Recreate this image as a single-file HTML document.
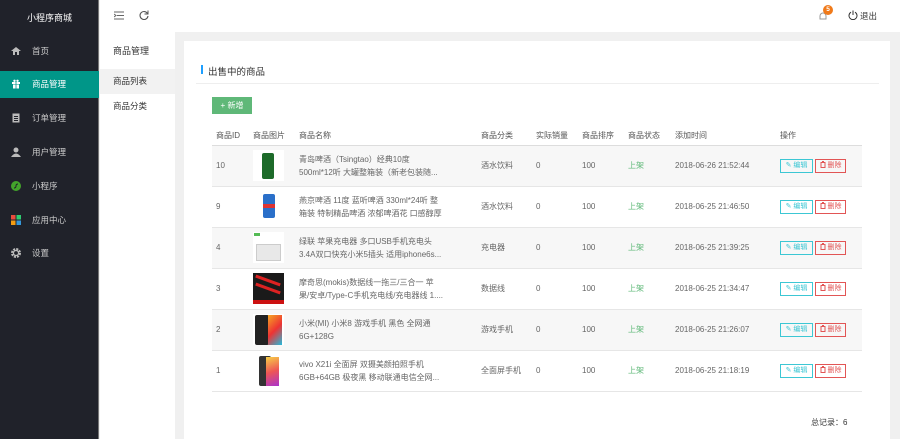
<!DOCTYPE html>
<html><head><meta charset="utf-8"><style>
*{margin:0;padding:0;box-sizing:border-box}
body{width:900px;height:439px;overflow:hidden;font-family:"Liberation Sans","Noto Sans CJK SC",sans-serif;font-size:8px;color:#555;background:#f0f0f0;position:relative}
.side{position:absolute;left:0;top:0;width:99px;height:439px;background:#20222a;color:#ddd;border-right:1px solid #777}
.logo{position:absolute;top:11px;width:99px;text-align:center;font-size:9px;color:#fff}
.mi{position:absolute;left:0;width:99px;height:27px;line-height:27px;padding-left:32px;font-size:8.5px;color:#ccc}
.mi.act{background:#009688;color:#fff}
.ic{position:absolute;left:11px;top:8px;width:10px;height:10px}
.top{position:absolute;left:100px;top:0;width:800px;height:32px;background:#fff}
.sub{position:absolute;left:100px;top:32px;width:75px;height:407px;background:#fff}
.card{position:absolute;left:184px;top:41px;width:706px;height:398px;background:#fff}
table{position:absolute;left:28px;top:86px;width:650px;border-collapse:collapse}
th{height:18px;text-align:left;font-weight:normal;color:#555;font-size:8px;border-bottom:1px solid #ddd;padding-left:4px}
td{height:41px;border-bottom:1px solid #e6e6e6;padding-left:4px;font-size:8px;color:#666;vertical-align:middle}
tr.g td{background:#f7f7f7}
.img{width:31px;height:31px;background:#fff;position:relative}
.nm{line-height:13px;color:#666}
.up{color:#5fb878}
.be{display:inline-block;width:33px;height:14px;border:1px solid #3cc7d4;color:#3cc7d4;font-size:7px;line-height:12px;text-align:center}
.bd{display:inline-block;width:31px;height:14px;border:1px solid #e25555;color:#e25555;font-size:7px;line-height:12px;text-align:center;margin-left:2px}
.bd svg{vertical-align:-1px}
</style></head><body>
<div class="side">
<div class="logo">小程序商城</div>
<div class="mi" style="top:38px"><svg class="ic" width="10" height="10"><path d="M0 5L5 1L10 5H8V9H6V6H4V9H2V5Z" fill="#bbb"/></svg>首页</div>
<div class="mi act" style="top:71px"><svg class="ic" width="10" height="10"><rect x="1" y="3" width="8" height="2" fill="#fff"/><rect x="2" y="5.5" width="6" height="4" fill="#fff"/><rect x="4.6" y="3" width="0.8" height="7" fill="#009688"/><circle cx="3.5" cy="1.8" r="1.2" fill="#fff"/><circle cx="6.5" cy="1.8" r="1.2" fill="#fff"/></svg>商品管理</div>
<div class="mi" style="top:105px"><svg class="ic" width="10" height="10"><rect x="1.5" y="0.5" width="7" height="9" fill="#bbb"/><rect x="3" y="3" width="4" height="1" fill="#20222a"/><rect x="3" y="5" width="4" height="1" fill="#20222a"/><rect x="3" y="7" width="4" height="1" fill="#20222a"/></svg>订单管理</div>
<div class="mi" style="top:139px"><svg class="ic" width="10" height="10"><circle cx="5" cy="3" r="2.5" fill="#bbb"/><path d="M0 10Q5 3 10 10Z" fill="#bbb"/></svg>用户管理</div>
<div class="mi" style="top:173px"><svg class="ic" width="10" height="10"><circle cx="5" cy="5" r="5" fill="#43a52b"/><path d="M3 7Q5 7 5 5Q5 3 7 3" stroke="#20222a" fill="none"/></svg>小程序</div>
<div class="mi" style="top:207px"><svg class="ic" width="10" height="10"><rect x="0" y="0" width="4.5" height="4.5" fill="#e94c3d"/><rect x="5.5" y="0" width="4.5" height="4.5" fill="#2ecc71"/><rect x="0" y="5.5" width="4.5" height="4.5" fill="#f39c12"/><rect x="5.5" y="5.5" width="4.5" height="4.5" fill="#3498db"/></svg>应用中心</div>
<div class="mi" style="top:240px"><svg class="ic" width="10" height="10"><circle cx="5" cy="5" r="3.8" fill="none" stroke="#bbb" stroke-width="2.4" stroke-dasharray="2 1"/><circle cx="5" cy="5" r="2.5" fill="none" stroke="#bbb" stroke-width="1.2"/></svg>设置</div>
</div>
<div class="top">
<svg style="position:absolute;left:14px;top:11px" width="10" height="9"><path d="M0 1H10M3 4.5H10M0 8H10M0 3L2 4.5L0 6" stroke="#666" fill="none"/></svg>
<svg style="position:absolute;left:39px;top:10px" width="10" height="10"><path d="M8.5 3.5A4 4 0 1 0 9 6" stroke="#555" fill="none" stroke-width="1.1"/><path d="M9 0.5V4H5.5" stroke="#555" fill="none"/></svg>
<svg style="position:absolute;left:718px;top:11px" width="10" height="10"><path d="M2 8V5A3 3 0 0 1 8 5V8H1.5H8.5" stroke="#999" fill="none"/></svg>
<div style="position:absolute;left:723px;top:5px;width:10px;height:10px;border-radius:5px;background:#f07a1a;color:#fff;font-size:6.5px;line-height:10px;text-align:center;font-weight:bold">5</div>
<svg style="position:absolute;left:748px;top:10px" width="10" height="10"><path d="M3 2.2A4 4 0 1 0 7 2.2" stroke="#333" fill="none"/><path d="M5 0.5V5" stroke="#333"/></svg>
<span style="position:absolute;left:760px;top:10px;font-size:8.5px;color:#333">退出</span>
</div>
<div class="sub">
<div style="position:absolute;left:13px;top:12px;font-size:9px;color:#333">商品管理</div>
<div style="position:absolute;left:0;top:37px;width:75px;height:25px;background:#f2f2f2;padding-left:13px;line-height:25px;color:#333;font-size:8.5px">商品列表</div>
<div style="position:absolute;left:13px;top:68px;color:#333;font-size:8.5px">商品分类</div>
</div>
<div class="card">
<div style="position:absolute;left:17px;top:24px;width:2px;height:9px;background:#1e9fff"></div>
<div style="position:absolute;left:24px;top:23px;font-size:9.5px;color:#333">出售中的商品</div>
<div style="position:absolute;left:12px;top:42px;width:683px;height:1px;background:#eee"></div>
<div style="position:absolute;left:28px;top:56px;width:40px;height:17px;background:#5fb878;color:#fff;font-size:8px;line-height:17px;text-align:center">+ 新增</div>
<table>
<tr><th style="width:37px">商品ID</th><th style="width:46px">商品图片</th><th style="width:182px">商品名称</th><th style="width:55px">商品分类</th><th style="width:46px">实际销量</th><th style="width:46px">商品排序</th><th style="width:47px">商品状态</th><th style="width:105px">添加时间</th><th>操作</th></tr>
<tr class="g"><td>10</td><td><div class="img"><div style="position:absolute;left:9px;top:3px;width:12px;height:26px;background:#1d6b2a;border-radius:2px"></div></div></td><td class="nm">青岛啤酒（Tsingtao）经典10度<br>500ml*12听 大罐整箱装（新老包装随...</td><td>酒水饮料</td><td>0</td><td>100</td><td class="up">上架</td><td>2018-06-26 21:52:44</td><td><span class="be">✎ 编辑</span><span class="bd"><svg width="6" height="7"><path d="M0.5 1.5H5.5M1 1.5V6.5H5V1.5M2 0.5H4" stroke="#e25555" fill="none"/></svg> 删除</span></td></tr>
<tr><td>9</td><td><div class="img"><div style="position:absolute;left:10px;top:3px;width:12px;height:24px;background:#2a6fc9;border-radius:2px"></div><div style="position:absolute;left:10px;top:13px;width:12px;height:4px;background:#d33"></div></div></td><td class="nm">燕京啤酒 11度 蓝听啤酒 330ml*24听 整<br>箱装 特制精品啤酒 浓郁啤酒花 口感醇厚</td><td>酒水饮料</td><td>0</td><td>100</td><td class="up">上架</td><td>2018-06-25 21:46:50</td><td><span class="be">✎ 编辑</span><span class="bd"><svg width="6" height="7"><path d="M0.5 1.5H5.5M1 1.5V6.5H5V1.5M2 0.5H4" stroke="#e25555" fill="none"/></svg> 删除</span></td></tr>
<tr class="g"><td>4</td><td><div class="img"><div style="position:absolute;left:3px;top:12px;width:25px;height:17px;background:#e8e8e8;border:1px solid #ccc"></div><div style="position:absolute;left:1px;top:1px;width:6px;height:3px;background:#5b5"></div></div></td><td class="nm">绿联 苹果充电器 多口USB手机充电头<br>3.4A双口快充小米5插头 适用iphone6s...</td><td>充电器</td><td>0</td><td>100</td><td class="up">上架</td><td>2018-06-25 21:39:25</td><td><span class="be">✎ 编辑</span><span class="bd"><svg width="6" height="7"><path d="M0.5 1.5H5.5M1 1.5V6.5H5V1.5M2 0.5H4" stroke="#e25555" fill="none"/></svg> 删除</span></td></tr>
<tr><td>3</td><td><div class="img" style="background:#1a1a1a"><div style="position:absolute;left:2px;top:6px;width:26px;height:3px;background:#d22;transform:rotate(20deg)"></div><div style="position:absolute;left:2px;top:14px;width:26px;height:3px;background:#d22;transform:rotate(20deg)"></div><div style="position:absolute;left:0;top:27px;width:31px;height:4px;background:#c11"></div></div></td><td class="nm">摩奇思(mokis)数据线一拖三/三合一 苹<br>果/安卓/Type-C手机充电线/充电器线 1....</td><td>数据线</td><td>0</td><td>100</td><td class="up">上架</td><td>2018-06-25 21:34:47</td><td><span class="be">✎ 编辑</span><span class="bd"><svg width="6" height="7"><path d="M0.5 1.5H5.5M1 1.5V6.5H5V1.5M2 0.5H4" stroke="#e25555" fill="none"/></svg> 删除</span></td></tr>
<tr class="g"><td>2</td><td><div class="img"><div style="position:absolute;left:2px;top:1px;width:14px;height:30px;background:#222;border-radius:2px"></div><div style="position:absolute;left:15px;top:1px;width:14px;height:30px;background:linear-gradient(135deg,#f5a623,#e33,#2bd)"></div></div></td><td class="nm">小米(MI) 小米8 游戏手机 黑色 全网通<br>6G+128G</td><td>游戏手机</td><td>0</td><td>100</td><td class="up">上架</td><td>2018-06-25 21:26:07</td><td><span class="be">✎ 编辑</span><span class="bd"><svg width="6" height="7"><path d="M0.5 1.5H5.5M1 1.5V6.5H5V1.5M2 0.5H4" stroke="#e25555" fill="none"/></svg> 删除</span></td></tr>
<tr><td>1</td><td><div class="img"><div style="position:absolute;left:6px;top:1px;width:12px;height:30px;background:#333;border-radius:2px"></div><div style="position:absolute;left:13px;top:2px;width:13px;height:29px;background:linear-gradient(160deg,#f7d046,#e55,#a3c)"></div></div></td><td class="nm">vivo X21i 全面屏 双摄美颜拍照手机<br>6GB+64GB 极夜黑 移动联通电信全网...</td><td>全面屏手机</td><td>0</td><td>100</td><td class="up">上架</td><td>2018-06-25 21:18:19</td><td><span class="be">✎ 编辑</span><span class="bd"><svg width="6" height="7"><path d="M0.5 1.5H5.5M1 1.5V6.5H5V1.5M2 0.5H4" stroke="#e25555" fill="none"/></svg> 删除</span></td></tr>
</table>
<div style="position:absolute;left:627px;top:376px;font-size:8px;color:#333">总记录：6</div>
</div>
</body></html>
